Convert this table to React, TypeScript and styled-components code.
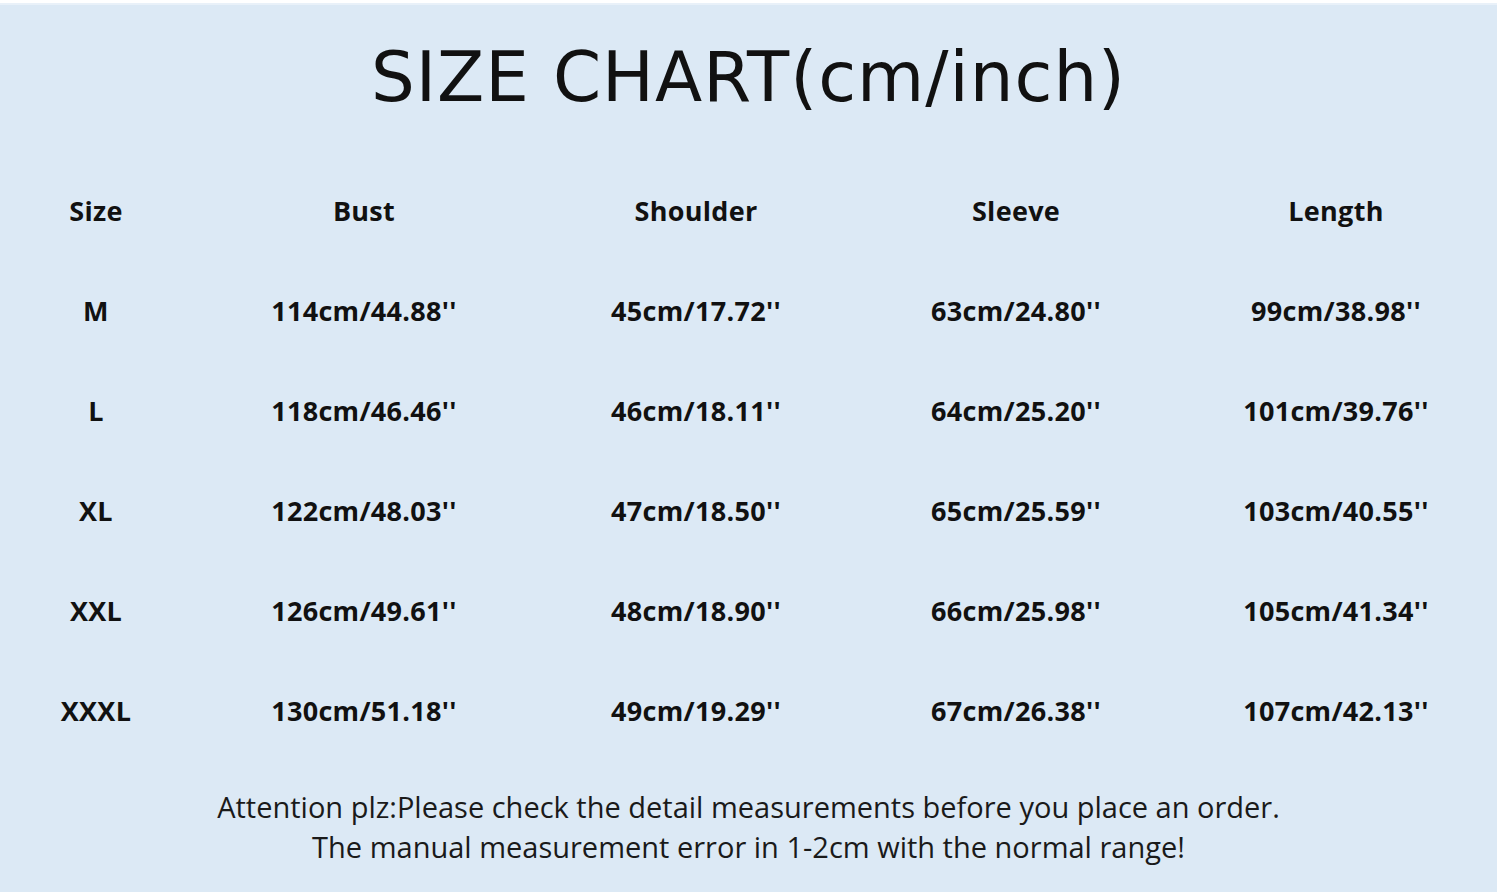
import React from "react";
import styled, { createGlobalStyle } from "styled-components";

const Global = createGlobalStyle`
  html, body { margin: 0; padding: 0; background: #ffffff; }
  #root { width: 1500px; height: 895px; }
`;

const Page = styled.div`
  box-sizing: border-box;
  width: 1500px;
  height: 895px;
  padding: 3px 3px 3px 0;
  background: #ffffff;
`;

const Panel = styled.div`
  box-sizing: border-box;
  height: 100%;
  background: #dce9f5;
  border-top: 2px solid #e9f1f9;
  display: flex;
  flex-direction: column;
  align-items: stretch;
`;

const Title = styled.h1`
  margin: 0;
  padding-top: 32px;
  height: 130px;
  box-sizing: border-box;
  text-align: center;
  font-family: "DejaVu Sans", sans-serif;
  font-weight: 400;
  font-size: 69px;
  line-height: 80px;
  letter-spacing: 1px;
  color: #111111;
`;

const Table = styled.div`
  display: grid;
  grid-template-columns: 192px 344px 320px 320px 320px;
  grid-auto-rows: 100px;
  margin-top: 50px;
`;

const Cell = styled.div<{ $head?: boolean }>`
  display: flex;
  align-items: center;
  justify-content: center;
  font-family: "Open Sans", "Noto Sans", sans-serif;
  font-weight: 700;
  font-size: 27px;
  letter-spacing: 0.3px;
  color: #111111;
  height: 50px;
`;

const Notes = styled.div`
  margin-top: 2px;
  text-align: center;
  font-family: "Open Sans", "Noto Sans", sans-serif;
  font-size: 29px;
  line-height: 40px;
  color: #1a1a1a;
`;

const headers = ["Size", "Bust", "Shoulder", "Sleeve", "Length"];
const rows = [
  ["M", "114cm/44.88''", "45cm/17.72''", "63cm/24.80''", "99cm/38.98''"],
  ["L", "118cm/46.46''", "46cm/18.11''", "64cm/25.20''", "101cm/39.76''"],
  ["XL", "122cm/48.03''", "47cm/18.50''", "65cm/25.59''", "103cm/40.55''"],
  ["XXL", "126cm/49.61''", "48cm/18.90''", "66cm/25.98''", "105cm/41.34''"],
  ["XXXL", "130cm/51.18''", "49cm/19.29''", "67cm/26.38''", "107cm/42.13''"],
];

export default function App() {
  return (
    <>
      <Global />
      <Page>
        <Panel>
          <Title>SIZE CHART(cm/inch)</Title>
          <Table>
            {headers.map((h) => (
              <Cell key={h} $head>
                {h}
              </Cell>
            ))}
            {rows.map((r) =>
              r.map((c, i) => <Cell key={r[0] + i}>{c}</Cell>)
            )}
          </Table>
          <Notes>
            Attention plz:Please check the detail measurements before you place an order.
            <br />
            The manual measurement error in 1-2cm with the normal range!
          </Notes>
        </Panel>
      </Page>
    </>
  );
}
